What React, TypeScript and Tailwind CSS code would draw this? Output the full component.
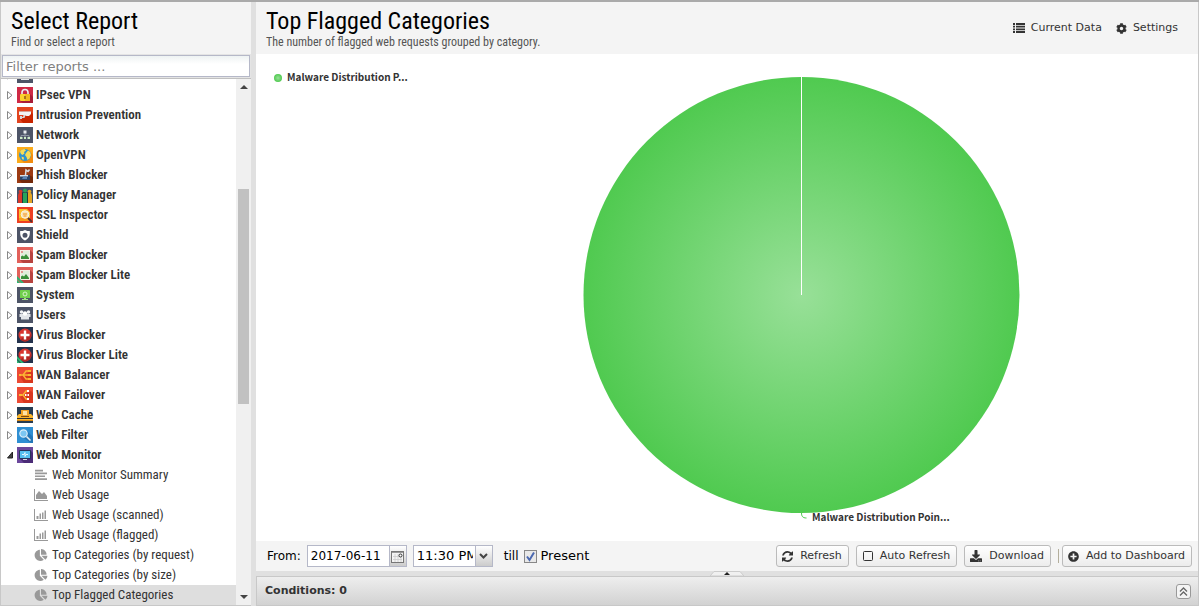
import { useState } from "react";
import type { ReactNode } from "react";
import { FaChartPie, FaCog, FaDownload, FaPlusCircle } from "react-icons/fa";

type App = {
  name: string;
  bg: string;
  art: ReactNode;
};

type Report = {
  name: string;
  kind: "text" | "area" | "bar" | "pie";
};

const condensed = "font-['Roboto_Condensed','Liberation_Sans_Narrow','Roboto',sans-serif]";
const dejavu = "font-['DejaVu_Sans',sans-serif]";

const spamArt = (
  <>
    <path d="M13 3l3 3v10H6l-3-3z" fill="#b8433f" />
    <rect x="3" y="3" width="10" height="10" fill="#f6ece4" />
    <rect x="4" y="4" width="8" height="8" fill="#dfeeda" />
    <path d="M4 12V9.500l1.500-1 1.500 1L9 7l3 4v1z" fill="#3a8f3a" />
    <rect x="4" y="4" width="2" height="2" fill="#e0968f" />
  </>
);

const virusArt = (
  <>
    <circle cx="8" cy="8" r="6.500" fill="#d8352f" />
    <path d="M3.500 12.500A6.500 6.500 0 0 0 14.500 8l-3-2z" fill="#b32624" />
    <path d="M6.800 3.500h2.400v3.300h3.300v2.400H9.200v3.300H6.800V9.200H3.500V6.800h3.300z" fill="#fff" />
  </>
);

const liteRibbon = <path d="M0 9l7 7H4l-4-4zM0 13l3 3H0z" fill="#2bb673" />;

const apps: App[] = [
  {
    name: "Hosts",
    bg: "#4d5467",
    art: <path d="M3 3h10v7H3zM6 11h4v1h2v1H4v-1h2z" fill="#e8eaee" />,
  },
  {
    name: "IPsec VPN",
    bg: "#cf2945",
    art: (
      <>
        <path d="M13 7l3 3v6H6l-3-2z" fill="#a81c37" />
        <path d="M5 8V5.500a3 3 0 0 1 6 0V8" fill="none" stroke="#e9eef2" strokeWidth="1.600" />
        <rect x="3" y="7" width="10" height="7" rx="1" fill="#fbd22d" />
        <path d="M8 7h4a1 1 0 0 1 1 1v5a1 1 0 0 1-1 1H8z" fill="#f0b81f" />
        <rect x="7" y="9" width="2" height="3" fill="#a8731a" />
      </>
    ),
  },
  {
    name: "Intrusion Prevention",
    bg: "#e2441f",
    art: (
      <>
        <path d="M14 5l2 2v9H6l-3-4 6-3z" fill="#c92500" />
        <path d="M2 4.500h12V7l-2 2H9.500L7.500 8H2z" fill="#f2f4f5" />
        <path d="M2 4h12v1H2z" fill="#d5a196" />
        <path d="M6.500 8h2L7.500 11H5v1H3V9h2v1h1z" fill="#d3d9dc" />
      </>
    ),
  },
  {
    name: "Network",
    bg: "#4d5467",
    art: (
      <>
        <path d="M8 5v3M4 11V8.500h8V11M8 8v3" fill="none" stroke="#8d93a3" />
        <rect x="6.500" y="3.500" width="3" height="3" fill="#e8eaee" />
        <path d="M3 10h2.500v2H3zM7 10h2v2H7zM10.500 10H13v2h-2.500z" fill="#cdebc8" />
      </>
    ),
  },
  {
    name: "OpenVPN",
    bg: "#fbab1b",
    art: (
      <>
        <path d="M13 4l3 4v8H7l-3-3z" fill="#f28c0f" />
        <circle cx="8" cy="8" r="6" fill="#2f93cf" />
        <path
          d="M3 4.700C4 3 5.700 2.200 7.500 2L9 3.500 7 5l.500 1.500L5.500 8 4 7zM9 6l2-2.500 2.200 1.600L14 8l-1.500 3.500L10.500 13l-1-3-1.500-2zM4.500 9.500L7 10.500 6.500 13 5 12z"
          fill="#f9dc55"
        />
      </>
    ),
  },
  {
    name: "Phish Blocker",
    bg: "#9c3a12",
    art: (
      <>
        <path d="M12 8l4 2v6H5l-3-3z" fill="#74290b" />
        <path d="M3 8h10v5H3z" fill="#2c4468" />
        <path d="M3 8h8v1.500H3z" fill="#d9dee6" />
        <path d="M8.500 8l.500-5 2 1.500 1.500-2" fill="none" stroke="#d7dde4" strokeWidth="1.500" />
        <path d="M6 10c1-1 3-1 4 0v2H5z" fill="#5c83b5" />
      </>
    ),
  },
  {
    name: "Policy Manager",
    bg: "#44526a",
    art: (
      <>
        <path d="M1 8l1-2h3v10H1z" fill="#d9372a" />
        <circle cx="3.500" cy="4.500" r="1.800" fill="#d9372a" />
        <path d="M11 6h3l1 2v8h-4z" fill="#e5a524" />
        <circle cx="12.500" cy="4.500" r="1.800" fill="#e5a524" />
        <path d="M5 5.500h6V16H5z" fill="#1f3a3d" />
        <path d="M6 6h4v10H6z" fill="#27a35a" />
        <circle cx="8" cy="3.500" r="2" fill="#27a35a" />
      </>
    ),
  },
  {
    name: "SSL Inspector",
    bg: "#ee3f22",
    art: (
      <>
        <path d="M2 2h8l3 3v9H2z" fill="#fbc02d" />
        <path d="M2 11h11v3H2z" fill="#f59c1a" />
        <circle cx="8" cy="7.500" r="3.800" fill="#fbe3b0" stroke="#f7f3e8" />
        <path d="M6 7h4M6.500 9h3" stroke="#ef8f1d" />
        <path d="M11 11l4 4" stroke="#5b3030" strokeWidth="2" />
      </>
    ),
  },
  {
    name: "Shield",
    bg: "#4d5467",
    art: (
      <path
        d="M8 3c1.500 1 3 1 4.800 1 .4 4.500-.8 7.500-4.800 9.500-4-2-5.200-5-4.800-9.500C5 4 6.500 4 8 3zm0 2.700a2.500 2.500 0 1 0 0 5 2.500 2.500 0 0 0 0-5z"
        fill="#fff"
        fillRule="evenodd"
      />
    ),
  },
  { name: "Spam Blocker", bg: "#e2605a", art: spamArt },
  { name: "Spam Blocker Lite", bg: "#e2605a", art: <>{spamArt}{liteRibbon}</> },
  {
    name: "System",
    bg: "#4d5467",
    art: (
      <>
        <rect x="3" y="3" width="10" height="8" rx="0.500" fill="#6fcf4c" />
        <circle cx="8" cy="7" r="2" fill="none" stroke="#d8f5cc" />
        <path d="M7 11h2v1h2v1H5v-1h2z" fill="#a5e48b" />
      </>
    ),
  },
  {
    name: "Users",
    bg: "#4d5467",
    art: (
      <>
        <circle cx="4.500" cy="5" r="1.700" fill="#f1f2f5" />
        <circle cx="11.500" cy="5" r="1.700" fill="#f1f2f5" />
        <path d="M2.500 7h11v3H12v2.500H4V10H2.500z" fill="#e3e5ea" />
        <circle cx="8" cy="6.500" r="2.200" fill="#fff" />
      </>
    ),
  },
  { name: "Virus Blocker", bg: "#24324d", art: virusArt },
  { name: "Virus Blocker Lite", bg: "#24324d", art: <>{virusArt}{liteRibbon}</> },
  {
    name: "WAN Balancer",
    bg: "#ec4a33",
    art: (
      <>
        <path d="M14 4l2 2v10H7l-4-6z" fill="#d8371f" />
        <path d="M3 8h3M12 4H9L6 8l3 4h3M6 8h6" fill="none" stroke="#fbb733" strokeWidth="1.300" />
        <path d="M11 3h3v2h-3zM11 7h3v2h-3zM11 11h3v2h-3zM2 7h2v2H2z" fill="#fbb733" />
      </>
    ),
  },
  {
    name: "WAN Failover",
    bg: "#ec4a33",
    art: (
      <>
        <path d="M14 4l2 2v10H7l-4-6z" fill="#d8371f" />
        <path d="M3 8h3M11 4H9L6 8l3 4h2" fill="none" stroke="#fbb733" strokeWidth="1.300" />
        <path d="M10 3h2v2h-2zM8 7h1.500v2H8zM10.500 7H12v2h-1.500zM10 11h2v2h-2z" fill="#fff" />
        <path d="M2 7h3v2H2z" fill="#fbb733" />
      </>
    ),
  },
  {
    name: "Web Cache",
    bg: "#263b52",
    art: (
      <>
        <path d="M0 9l2-2h12l2 2v5H0z" fill="#f9b52b" />
        <path d="M4 3h8v6H4z" fill="#f0a428" />
        <path d="M6 4h4v4H6z" fill="#fbe3a8" />
        <path d="M4 9h8v1H4z" fill="#7d4a0c" />
        <path d="M0 11h16v1H0z" fill="#2a3036" />
        <path d="M0 13h16v1H0z" fill="#d9860f" />
      </>
    ),
  },
  {
    name: "Web Filter",
    bg: "#2f8fd3",
    art: (
      <>
        <path d="M10 4l6 6v6h-2L5 10z" fill="#2477b8" />
        <circle cx="6.500" cy="6.500" r="3.700" fill="#7cc6f2" stroke="#d9eefa" strokeWidth="1.200" />
        <path d="M9.500 9.500l4 4" stroke="#e6eef3" strokeWidth="1.600" />
      </>
    ),
  },
  {
    name: "Web Monitor",
    bg: "#6b479c",
    art: (
      <>
        <path d="M14 4l2 2v10H7l-4-4z" fill="#4b2c77" />
        <rect x="2" y="3" width="12" height="9" rx="1" fill="#26355a" />
        <rect x="3" y="4" width="10" height="7" fill="#56c0ef" />
        <path d="M5 7.500h2l1-2v4l1-2h2" fill="none" stroke="#e8f8ff" />
        <path d="M6 12h4v1H6z" fill="#d6d9e0" />
      </>
    ),
  },
];

const reports: Report[] = [
  { name: "Web Monitor Summary", kind: "text" },
  { name: "Web Usage", kind: "area" },
  { name: "Web Usage (scanned)", kind: "bar" },
  { name: "Web Usage (flagged)", kind: "bar" },
  { name: "Top Categories (by request)", kind: "pie" },
  { name: "Top Categories (by size)", kind: "pie" },
  { name: "Top Flagged Categories", kind: "pie" },
];

const AppIcon = ({ app }: { app: App }) => (
  <svg viewBox="0 0 16 16" className="h-4 w-4 shrink-0" aria-hidden="true">
    <rect width="16" height="16" fill={app.bg} />
    {app.art}
  </svg>
);

const ReportIcon = ({ kind }: { kind: Report["kind"] }) => {
  if (kind === "pie") return <FaChartPie className="h-3 w-3.5 shrink-0 text-[#999]" />;
  return (
    <svg viewBox="0 0 14 12" className="h-3 w-3.5 shrink-0 fill-[#999]" aria-hidden="true">
      {kind === "text" && <path d="M1 .800h8v1.700H1zM1 3.600h12v1.700H1zM1 6.400h10v1.700H1zM1 9.200h12v1.700H1z" />}
      {kind === "area" && <path d="M0 0h1v11h13v1H0zM2 10V6l3-4 3 3 2-2 3 4v3z" />}
      {kind === "bar" && <path d="M0 0h1v11h13v1H0zM2.500 7h2v3h-2zM5.500 4.500h1.500V10H5.500zM8 3.500h1.500V10H8zM10.500 1.500h1.500V10h-1.500z" />}
    </svg>
  );
};

const RefreshIcon = () => (
  <svg viewBox="0 128 1536 1536" className="h-[11px] w-[11px] fill-current" aria-hidden="true">
    <path d="M1511 1056q0 5-1 7-64 268-268 434.500t-478 166.500q-146 0-282.500-55t-243.500-157l-129 129q-19 19-45 19t-45-19-19-45v-448q0-26 19-45t45-19h448q26 0 45 19t19 45-19 45l-137 137q71 66 161 102t187 36q134 0 250-65t186-179q11-17 53-117 8-23 30-23h192q13 0 22.500 9.500t9.500 22.500zm25-800v448q0 26-19 45t-45 19h-448q-26 0-45-19t-19-45 19-45l138-138q-148-137-349-137-134 0-250 65t-186 179q-11 17-53 117-8 23-30 23h-199q-13 0-22.500-9.500t-9.500-22.500v-7q65-268 270-434.500t480-166.500q146 0 284 55.500t245 156.500l130-129q19-19 45-19t45 19 19 45z" />
  </svg>
);

const ListIcon = () => (
  <svg viewBox="0 0 12 10" className="h-2.5 w-3 fill-current" aria-hidden="true">
    <path d="M0 0h2v2H0zM3 0h9v2H3zM0 2.700h2v1.900H0zM3 2.700h9v1.900H3zM0 5.400h2v1.900H0zM3 5.400h9v1.900H3zM0 8h2v2H0zM3 8h9v2H3z" />
  </svg>
);

const ToolButton = ({ icon, label, onClick }: { icon: ReactNode; label: string; onClick?: () => void }) => (
  <button
    type="button"
    onClick={onClick}
    className="flex h-[22px] items-center gap-[7px] rounded-[3px] border border-[#bbb] bg-linear-to-b from-white to-[#ececec] pr-1.5 pl-[5px] text-[11px] whitespace-nowrap text-[#333]"
  >
    {icon}
    {label}
  </button>
);

const Sidebar = () => {
  const [selected, setSelected] = useState("Top Flagged Categories");
  const [filter, setFilter] = useState("");
  const match = (name: string) => name.toLowerCase().includes(filter.toLowerCase());

  return (
    <aside className="flex w-[251px] shrink-0 flex-col border-b border-l border-[#c8c8c8] bg-white">
      <header className={`h-[52px] shrink-0 bg-[#f4f4f4] px-2.5 pt-1.5 ${condensed}`}>
        <h1 className="text-2xl leading-[26px] text-black">Select Report</h1>
        <p className="text-[12px] leading-4 text-[#555]">Find or select a report</p>
      </header>
      <div className="shrink-0 border-b border-[#c0c0c0] bg-[#e4e4e4] px-px py-px">
        <input
          type="text"
          aria-label="Filter reports"
          placeholder="Filter reports ..."
          value={filter}
          onChange={(e) => setFilter(e.target.value)}
          className="block h-[22px] w-full border border-[#b5b8c8] bg-linear-to-b from-[#eef3f3] to-white to-40% px-[3px] text-[13px] text-black outline-none placeholder:text-[#808080]"
        />
      </div>
      <div className="flex min-h-0 flex-1">
        <nav className="min-w-0 flex-1 overflow-hidden">
          <ul className={`-mt-3.5 text-[13px] text-[#333] ${condensed}`}>
            {apps.filter((app) => match(app.name) || app.name === "Web Monitor").map((app) => (
              <li key={app.name} className="flex h-5 items-center gap-[3px] pl-[5px] font-semibold">
                <svg viewBox="0 0 8 10" className="h-2.5 w-2 shrink-0" aria-hidden="true">
                  {app.name === "Web Monitor" ? (
                    <path d="M6.500 2v6h-5z" fill="#444" stroke="#222" />
                  ) : (
                    <path d="M1.500 1.500v7.500L6 5.250z" fill="#fff" stroke="#888" />
                  )}
                </svg>
                <AppIcon app={app} />
                {app.name}
              </li>
            ))}
            {reports.filter((report) => match(report.name)).map((report) => (
              <li key={report.name}>
                <button
                  type="button"
                  onClick={() => setSelected(report.name)}
                  className={`flex h-5 w-full items-center gap-1 pl-[33px] text-left whitespace-nowrap ${
                    selected === report.name ? "bg-[#dedede]" : ""
                  }`}
                >
                  <ReportIcon kind={report.kind} />
                  {report.name}
                </button>
              </li>
            ))}
          </ul>
        </nav>
        <div className="flex w-[15px] shrink-0 flex-col items-center bg-[#f0f0f0] py-1.5">
          <svg viewBox="0 0 8 4" className="h-1 w-2 fill-[#444]" aria-hidden="true">
            <path d="M4 0l4 4H0z" />
          </svg>
          <div className="flex w-full flex-1 flex-col items-center">
            <div className="flex-[100]" />
            <div className="w-[11px] flex-[214] bg-[#c1c1c1]" />
            <div className="flex-[191]" />
          </div>
          <svg viewBox="0 0 8 4" className="h-1 w-2 fill-[#444]" aria-hidden="true">
            <path d="M0 0h8L4 4z" />
          </svg>
        </div>
      </div>
    </aside>
  );
};

const PieChart = () => (
  <div className="flex min-h-0 flex-1 bg-white">
    <div className="flex w-[149px] shrink-0 items-start gap-[5px] pt-[15px] pl-[18px] font-['Noto_Sans_CJK_SC',sans-serif] text-[10px] leading-4 font-bold whitespace-nowrap text-[#333]">
      <svg viewBox="0 0 8 8" className="mt-[5px] h-2 w-2 shrink-0" aria-hidden="true">
        <circle cx="4" cy="4" r="4" fill="url(#slice)" />
      </svg>
      Malware Distribution P...
    </div>
    <svg viewBox="0 0 793 487" className="min-w-0 flex-1" role="img" aria-label="Top Flagged Categories">
      <defs>
        <radialGradient id="slice">
          <stop offset="0" stopColor="#98e098" />
          <stop offset="1" stopColor="#50ca50" />
        </radialGradient>
      </defs>
      <circle cx="396.500" cy="241" r="218" fill="url(#slice)" />
      <path d="M396.500 23v218" stroke="#fff" />
      <path d="M396.500 459c0 3 1 5 5 5" fill="none" stroke="#50ca50" />
      <text x="407" y="467" fill="#333" className="font-['Noto_Sans_CJK_SC',sans-serif] text-[10px] font-bold">
        Malware Distribution Poin...
      </text>
    </svg>
  </div>
);

const BottomBar = () => {
  const [present, setPresent] = useState(true);
  const [auto, setAuto] = useState(false);

  return (
    <div className="flex h-[30px] shrink-0 items-center bg-[#f4f4f4] pr-1.5 pl-[11px] text-[12px] text-black">
      <label htmlFor="from-date">From:</label>
      <div className="ml-1.5 flex h-[22px]">
        <input
          id="from-date"
          type="text"
          defaultValue="2017-06-11"
          className="w-[83px] border border-[#b5b8c8] bg-white pl-[3px] outline-none"
        />
        <button
          type="button"
          aria-label="Pick a date"
          className="flex w-[17px] items-center justify-center border border-l-0 border-[#b5b8c8] bg-linear-to-b from-white to-[#ccc]"
        >
          <svg viewBox="0 0 13 13" className="h-[13px] w-[13px]" aria-hidden="true">
            <rect x="0.500" y="1.500" width="12" height="11" fill="#f4f4f4" stroke="#777" />
            <path d="M1 2.500h11" stroke="#999" />
            <path d="M2 6.500h9M2 9.500h9M4 4v8M7 4v8M10 4v8" stroke="#ccc" strokeWidth="0.800" />
            <circle cx="9.500" cy="5.500" r="1.500" fill="#fff" stroke="#333" />
          </svg>
        </button>
      </div>
      <div className="relative ml-1.5 h-[22px] w-20">
        <select
          aria-label="From time"
          className="h-full w-full appearance-none overflow-hidden border border-[#b5b8c8] bg-white pr-[19px] pl-[3px] text-[13px] text-clip outline-none"
        >
          <option>11:30 PM</option>
          <option>11:45 PM</option>
        </select>
        <span className="pointer-events-none absolute top-0 right-0 flex h-[22px] w-[18px] items-center justify-center border border-[#b5b8c8] bg-linear-to-b from-white to-[#ccc]">
          <svg viewBox="0 0 9 6" className="h-1.5 w-[9px]" aria-hidden="true">
            <path d="M1 1l3.500 3.500L8 1" fill="none" stroke="#444" strokeWidth="2" />
          </svg>
        </span>
      </div>
      <span className="ml-[11px]">till</span>
      <label className="ml-[5px] flex items-center gap-1 text-[13px]">
        <input
          type="checkbox"
          checked={present}
          onChange={() => setPresent(!present)}
          className="peer h-[13px] w-[13px] appearance-none border border-[#888] bg-[#e8e8e8]"
        />
        <svg
          viewBox="0 0 13 13"
          className="pointer-events-none invisible -ml-[17px] h-[13px] w-[13px] peer-checked:visible"
          aria-hidden="true"
        >
          <path d="M3 6.500l2.500 3.500L10 2.500" fill="none" stroke="#4a68b0" strokeWidth="2" />
        </svg>
        Present
      </label>
      <div className="ml-auto flex items-center gap-[7px]">
        <ToolButton icon={<RefreshIcon />} label="Refresh" />
        <ToolButton
          icon={
            <svg viewBox="0 0 11 11" className="h-[11px] w-[11px]" aria-hidden="true">
              <rect x="1.500" y="0.500" width="9" height="9" rx="1" fill={auto ? "#333" : "none"} stroke="#333" />
            </svg>
          }
          label="Auto Refresh"
          onClick={() => setAuto(!auto)}
        />
        <ToolButton icon={<FaDownload className="h-3 w-3" />} label="Download" />
        <div className="flex items-center gap-[3px]">
          <div className="h-3.5 w-px bg-[#b3ae9c]" />
          <ToolButton icon={<FaPlusCircle className="h-[11px] w-[11px]" />} label="Add to Dashboard" />
        </div>
      </div>
    </div>
  );
};

const ReportsPage = () => {
  return (
    <div className={`flex h-screen w-full flex-col border-t-2 border-[#aaa] bg-[#e0e0e0] ${dejavu}`}>
      <div className="flex min-h-0 flex-1">
        <Sidebar />
        <main className="ml-[5px] flex min-w-0 flex-1 flex-col border-r border-[#c8c8c8]">
          <header className="flex h-[52px] shrink-0 items-center justify-between bg-[#f4f4f4] pr-5 pl-2.5">
            <div className={`self-start pt-1.5 ${condensed}`}>
              <h2 className="text-2xl leading-[26px] text-black">Top Flagged Categories</h2>
              <p className="text-[12px] leading-4 text-[#555]">
                The number of flagged web requests grouped by category.
              </p>
            </div>
            <div className="flex gap-3.5 text-[11px] text-[#333]">
              <button type="button" className="flex items-center gap-1.5">
                <ListIcon />
                Current Data
              </button>
              <button type="button" className="flex items-center gap-1.5">
                <FaCog className="h-[11px] w-[11px]" />
                Settings
              </button>
            </div>
          </header>
          <PieChart />
          <BottomBar />
          <div className="flex h-[5px] shrink-0 justify-center bg-[#e0e0e0]">
            <svg viewBox="0 0 34 5" className="h-[5px] w-[34px]" aria-hidden="true">
              <path d="M0 5l4-4.500h26L34 5z" fill="#f0f0f0" stroke="#ccc" />
              <path d="M17 1l3 3h-6z" fill="#222" />
            </svg>
          </div>
          <section className="flex h-[30px] shrink-0 items-center justify-between border border-r-0 border-[#c8c8c8] bg-linear-to-b from-[#eee] to-[#d2d2d2] pr-[7px] pl-2">
            <h3 className="text-[11px] font-bold text-[#333]">Conditions: 0</h3>
            <button
              type="button"
              aria-label="Expand conditions"
              className="flex h-[15px] w-[15px] items-center justify-center rounded-[3px] border border-[#999] bg-[#f4f4f4]"
            >
              <svg viewBox="0 0 9 9" className="h-[9px] w-[9px]" aria-hidden="true">
                <path d="M1 4.500L4.500 1 8 4.500M1 8.500L4.500 5 8 8.500" fill="none" stroke="#666" strokeWidth="1.300" />
              </svg>
            </button>
          </section>
        </main>
      </div>
    </div>
  );
};

export default ReportsPage;
